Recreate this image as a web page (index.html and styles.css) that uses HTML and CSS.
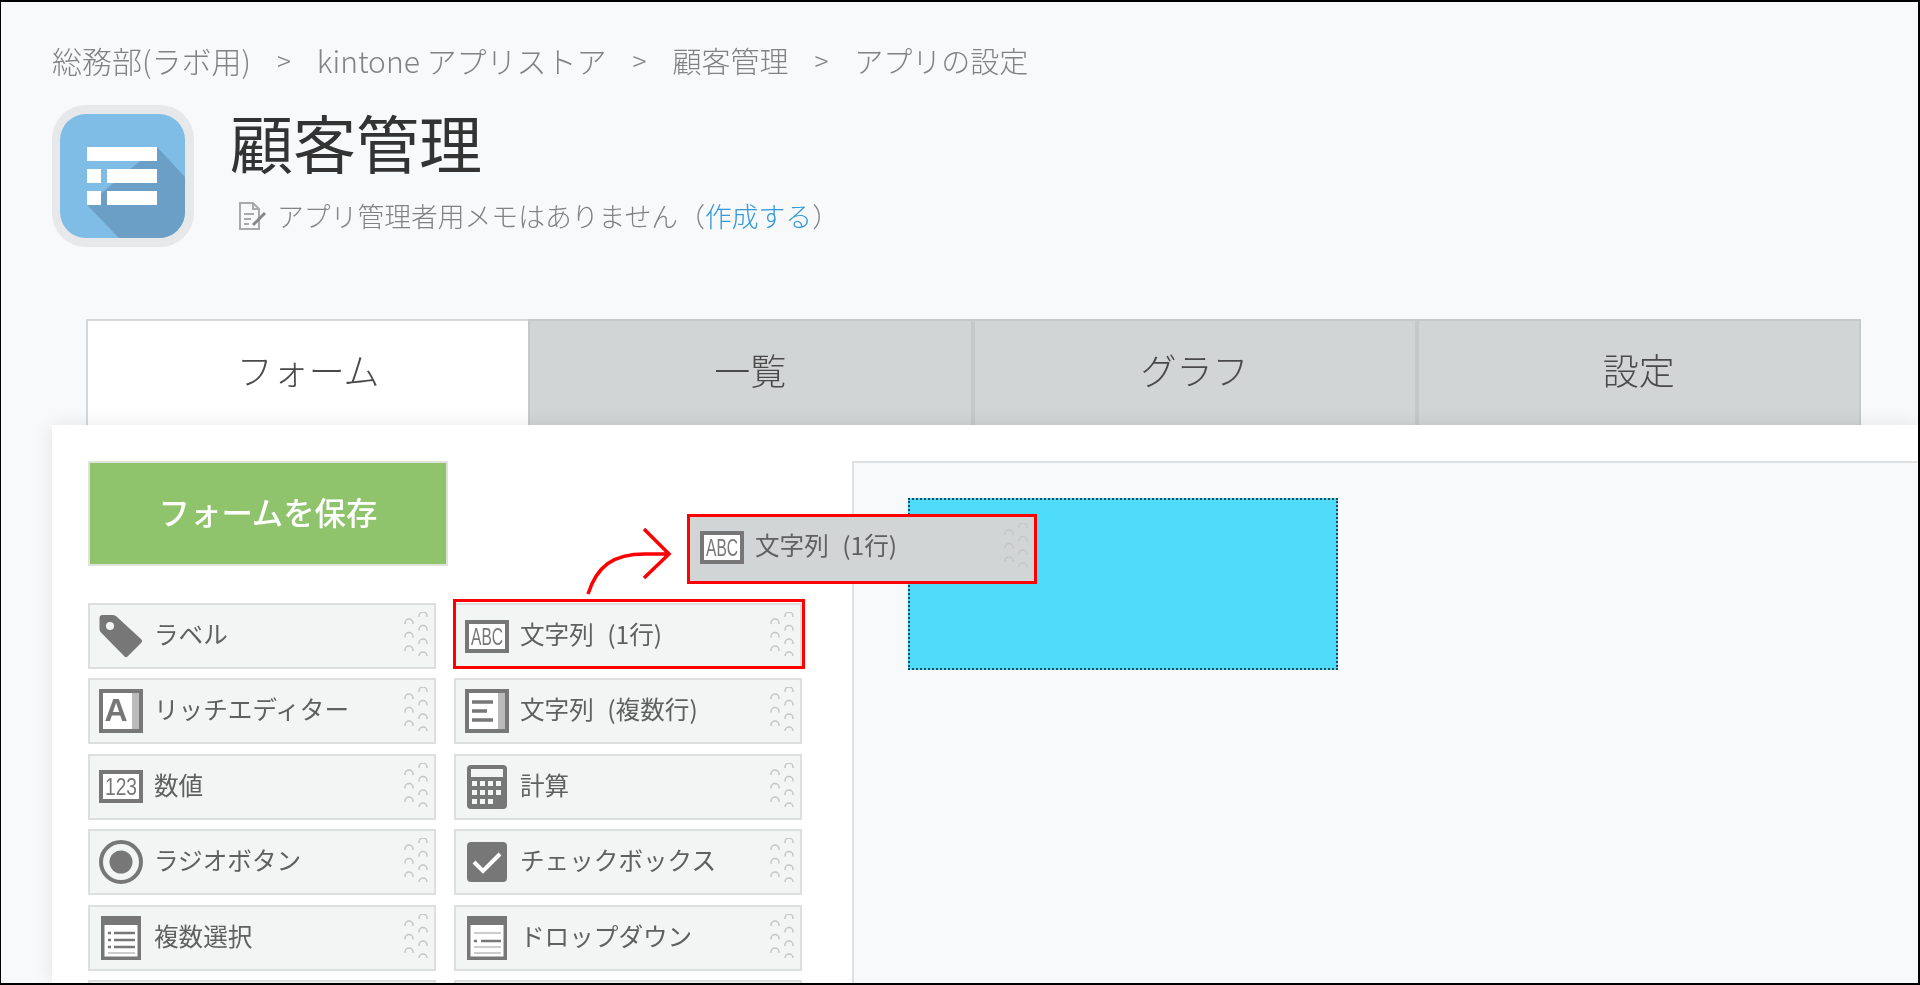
FILE: index.html
```html
<!DOCTYPE html>
<html lang="ja">
<head>
<meta charset="utf-8">
<title>アプリの設定</title>
<link rel="stylesheet" href="styles.css">
</head>
<body>
<svg class="defs" width="0" height="0" aria-hidden="true">
  <defs>
    <symbol id="grip" viewBox="0 0 26 44">
      <g class="grip-arcs">
        <path d="M1 12v-1a4 4 0 0 1 8 0v1M1 25.500v-1a4 4 0 0 1 8 0v1M1 39v-1a4 4 0 0 1 8 0v1"/>
        <path d="M15 5v-1a4 4 0 0 1 8 0v1M15 18.500v-1a4 4 0 0 1 8 0v1M15 32v-1a4 4 0 0 1 8 0v1M15 44v0a4 4 0 0 1 8 0v0"/>
      </g>
    </symbol>
    <symbol id="i-tag" viewBox="0 0 44 44">
      <path class="ic-fill" d="M4 1h10q2 0 3.500 1.500l25 23q1.500 1.500 0 3l-14 14q-1.500 1.500-3 0l-23.500-24q-1.500-1.500-1.500-3.500V4q0-3 3-3z"/>
      <circle class="ic-hole" cx="11" cy="12" r="4"/>
    </symbol>
    <symbol id="i-rich" viewBox="0 0 44 44">
      <rect class="ic-frame" x="2" y="2" width="40" height="40"/>
      <rect class="ic-band" x="33" y="4" width="7" height="36"/>
      <text class="ic-bigletter" x="17" y="32">A</text>
    </symbol>
    <symbol id="i-abc" viewBox="0 0 44 33">
      <rect class="ic-frame" x="2" y="2" width="40" height="29"/>
      <text class="ic-smalltext" x="6" y="24.500" textLength="32" lengthAdjust="spacingAndGlyphs">ABC</text>
    </symbol>
    <symbol id="i-123" viewBox="0 0 44 33">
      <rect class="ic-frame" x="2" y="2" width="40" height="29"/>
      <text class="ic-smalltext" x="6" y="24.500" textLength="32" lengthAdjust="spacingAndGlyphs">123</text>
    </symbol>
    <symbol id="i-multi" viewBox="0 0 44 44">
      <rect class="ic-frame" x="2" y="2" width="40" height="40"/>
      <rect class="ic-band" x="33" y="4" width="7" height="36"/>
      <path class="ic-line" d="M7 13h21M7 22h15M7 31h21"/>
    </symbol>
    <symbol id="i-calc" viewBox="0 0 40 44">
      <rect class="ic-fill" x="0" y="0" width="40" height="44" rx="4"/>
      <rect class="ic-screen" x="4" y="4" width="32" height="8"/>
      <g class="ic-screen">
        <rect x="5" y="16" width="5" height="5"/><rect x="13" y="16" width="5" height="5"/><rect x="21" y="16" width="5" height="5"/><rect x="29" y="16" width="5" height="5"/>
        <rect x="5" y="25" width="5" height="5"/><rect x="13" y="25" width="5" height="5"/><rect x="21" y="25" width="5" height="5"/><rect x="29" y="25" width="5" height="5"/>
        <rect x="5" y="34" width="5" height="5"/><rect x="13" y="34" width="5" height="5"/><rect x="21" y="34" width="5" height="5"/>
      </g>
    </symbol>
    <symbol id="i-radio" viewBox="0 0 44 44">
      <circle class="ic-ring" cx="22" cy="22" r="20"/>
      <circle class="ic-fill" cx="22" cy="22" r="11.500"/>
    </symbol>
    <symbol id="i-check" viewBox="0 0 40 40">
      <rect class="ic-fill" width="40" height="40" rx="4"/>
      <path class="ic-tick" d="M7 20l9 9 17-17"/>
    </symbol>
    <symbol id="i-select" viewBox="0 0 40 44">
      <rect class="ic-frame" x="1.500" y="1.500" width="37" height="41"/>
      <rect class="ic-fill" x="2" y="2" width="36" height="7"/>
      <path class="ic-line-s" d="M13 17h21M13 24h21M13 31h21"/>
      <path class="ic-line-s" d="M7 17h3M7 24h3M7 31h3"/>
      <path class="ic-line-f" d="M7 37h27"/>
    </symbol>
    <symbol id="i-drop" viewBox="0 0 40 44">
      <rect class="ic-frame" x="1.500" y="1.500" width="37" height="41"/>
      <rect class="ic-fill" x="2" y="2" width="36" height="7"/>
      <path class="ic-line-f" d="M7 17h27M7 31h27M7 37h27"/>
      <path class="ic-line-s" d="M7 25h3M14 25h20"/>
    </symbol>
  </defs>
</svg>

<div class="frame">
  <nav class="crumbs">
    <span>総務部(ラボ用)</span><span class="sep">&gt;</span>
    <span>kintone アプリストア</span><span class="sep">&gt;</span>
    <span class="crumb-tight">顧客管理</span><span class="sep">&gt;</span>
    <span class="crumb-tight">アプリの設定</span>
  </nav>

  <header class="app-head">
    <svg class="app-icon" width="142" height="142" viewBox="0 0 142 142">
      <rect class="app-outer" width="142" height="142" rx="34"/>
      <clipPath id="app-clip"><rect x="8" y="9" width="125" height="124" rx="26"/></clipPath>
      <rect class="app-inner" x="8" y="9" width="125" height="124" rx="26"/>
      <polygon class="app-shadow" clip-path="url(#app-clip)" points="105,42 133,72 133,133 67,133 35,100"/>
      <g class="app-bars">
        <rect x="35" y="42" width="70" height="14"/>
        <rect x="35" y="64" width="14" height="14"/><rect x="55" y="64" width="50" height="14"/>
        <rect x="35" y="86" width="14" height="14"/><rect x="55" y="86" width="50" height="14"/>
      </g>
    </svg>
    <div class="app-meta">
      <h1 class="app-title">顧客管理</h1>
      <p class="memo">
        <svg class="memo-icon" width="30" height="30" viewBox="0 0 30 30">
          <path class="memo-sheet" d="M2 2h13l6 6v20H2zM15 2v6h6"/>
          <path class="memo-sheet" d="M6 13h10M6 18h7M6 23h5"/>
          <path class="memo-pen" d="M15 24l12-12"/>
        </svg>
        <span>アプリ管理者用メモはありません（<a class="memo-link">作成する</a>）</span>
      </p>
    </div>
  </header>

  <div class="tabs">
    <div class="tab tab-active">フォーム</div>
    <div class="tab">一覧</div>
    <div class="tab">グラフ</div>
    <div class="tab">設定</div>
  </div>

  <main class="panel">
    <aside class="palette">
      <button class="save">フォームを保存</button>
      <div class="fields">
        <div class="field"><span class="f-icon"><svg width="44" height="44"><use href="#i-tag"/></svg></span><span class="f-label">ラベル</span><svg class="f-grip" width="26" height="44"><use href="#grip"/></svg></div>
        <div class="field"><span class="f-mark"></span><span class="f-icon"><svg width="44" height="33"><use href="#i-abc"/></svg></span><span class="f-label">文字列 (1行)</span><svg class="f-grip" width="26" height="44"><use href="#grip"/></svg></div>
        <div class="field"><span class="f-icon"><svg width="44" height="44"><use href="#i-rich"/></svg></span><span class="f-label">リッチエディター</span><svg class="f-grip" width="26" height="44"><use href="#grip"/></svg></div>
        <div class="field"><span class="f-icon"><svg width="44" height="44"><use href="#i-multi"/></svg></span><span class="f-label">文字列 (複数行)</span><svg class="f-grip" width="26" height="44"><use href="#grip"/></svg></div>
        <div class="field"><span class="f-icon"><svg width="44" height="33"><use href="#i-123"/></svg></span><span class="f-label">数値</span><svg class="f-grip" width="26" height="44"><use href="#grip"/></svg></div>
        <div class="field"><span class="f-icon"><svg width="40" height="44"><use href="#i-calc"/></svg></span><span class="f-label">計算</span><svg class="f-grip" width="26" height="44"><use href="#grip"/></svg></div>
        <div class="field"><span class="f-icon"><svg width="44" height="44"><use href="#i-radio"/></svg></span><span class="f-label">ラジオボタン</span><svg class="f-grip" width="26" height="44"><use href="#grip"/></svg></div>
        <div class="field"><span class="f-icon"><svg width="40" height="40"><use href="#i-check"/></svg></span><span class="f-label">チェックボックス</span><svg class="f-grip" width="26" height="44"><use href="#grip"/></svg></div>
        <div class="field"><span class="f-icon"><svg width="40" height="44"><use href="#i-select"/></svg></span><span class="f-label">複数選択</span><svg class="f-grip" width="26" height="44"><use href="#grip"/></svg></div>
        <div class="field"><span class="f-icon"><svg width="40" height="44"><use href="#i-drop"/></svg></span><span class="f-label">ドロップダウン</span><svg class="f-grip" width="26" height="44"><use href="#grip"/></svg></div>
        <div class="field"></div>
        <div class="field"></div>
      </div>
    </aside>
    <section class="canvas">
      <div class="drop"></div>
    </section>
  </main>

  <svg class="arrow" width="90" height="72" viewBox="0 0 90 72">
    <path d="M3 68C12 40 28 28 60 28H84M59 3L84 28L59 52"/>
  </svg>
  <div class="field drag"><span class="f-icon"><svg width="44" height="33"><use href="#i-abc"/></svg></span><span class="f-label">文字列 (1行)</span><svg class="f-grip" width="26" height="44"><use href="#grip"/></svg></div>
</div>
</body>
</html>
```

FILE: styles.css
```css
* { box-sizing: border-box; }
html, body { margin: 0; height: 100%; overflow: hidden; }
body { font-family: "Noto Sans CJK JP", "Noto Sans", sans-serif; background: #000; }
.defs { position: absolute; }

.frame {
  position: relative;
  width: 1920px;
  height: 985px;
  border-style: solid;
  border-color: #000;
  border-width: 2px 2px 2px 1px;
  background: #f7f9fa;
  overflow: hidden;
  display: flex;
  flex-direction: column;
  filter: blur(.35px);
}

.crumbs {
  margin: 40px 0 0 51px;
  height: 36px;
  display: flex;
  align-items: center;
  font-size: 30px;
  line-height: 36px;
  color: #828282;
  font-weight: 300;
}
.crumb-tight { font-size: 29px; }
.sep { margin: 0 26px; font-size: 26px; }

.app-head { display: flex; margin: 27px 0 0 51px; height: 142px; }
.app-outer { fill: #e6e8e9; }
.app-inner { fill: #7fbde6; }
.app-shadow { fill: #6c9fc5; }
.app-bars { fill: #fff; }
.app-meta { margin-left: 36px; }
.app-title { margin: -6px 0 0; font-size: 63px; line-height: 84px; font-weight: 400; color: #333; }
.memo { margin: 15px 0 0 8px; display: flex; align-items: center; gap: 9px; font-size: 26.800px; line-height: 36px; color: #828282; font-weight: 300; }
.memo-sheet { fill: none; stroke: #aaa; stroke-width: 2; }
.memo-pen { fill: none; stroke: #888; stroke-width: 3; }
.memo-link { color: #3498db; }

.tabs { display: flex; margin: 72px 0 0 85px; width: 1775px; height: 106px; flex: none; }
.tab {
  flex: 1;
  display: flex;
  justify-content: center;
  align-items: center;
  padding-bottom: 8px;
  font-size: 36px;
  color: #4a4a4a;
  font-weight: 300;
  background: #d2d5d6;
  border: solid #c6c9ca;
  border-width: 2px 2px 0 2px;
}
.tab-active { background: #fff; border-color: #d5d7d8; border-right: 0; }

.panel {
  position: relative;
  flex: 1;
  min-height: 0;
  margin-left: 51px;
  display: flex;
  background: #fff;
  box-shadow: 0 0 18px rgba(0, 0, 0, .09);
  overflow: hidden;
}
.palette { width: 800px; flex: none; padding: 36px 0 0 36px; }
.save {
  display: block;
  width: 360px;
  height: 105px;
  font: 500 31.400px "Noto Sans CJK JP", sans-serif;
  color: #fff;
  background: #8fc36c;
  border: 2px solid #dfe3dc;
  padding: 0 0 5px;
}
.fields {
  margin-top: 37px;
  display: grid;
  grid-template-columns: 348px 348px;
  grid-auto-rows: 66px;
  column-gap: 18px;
  row-gap: 9.400px;
}
.field {
  position: relative;
  display: flex;
  align-items: center;
  background: #f3f4f4;
  border: 2px solid #dcdee0;
  font-size: 24.600px;
  word-spacing: 8px;
  color: #606060;
}
.f-icon { width: 44px; margin-left: 9px; display: flex; justify-content: center; flex: none; }
.f-icon svg { display: block; }
.f-label { margin-left: 11px; flex: 1; margin-top: -6px; white-space: nowrap; }
.f-grip { flex: none; margin-right: 4px; margin-top: -4px; }
.grip-arcs { fill: none; stroke: #c4c6c6; stroke-width: 1.500; }
.f-mark { position: absolute; left: -3px; top: -6px; right: -5px; bottom: -2px; border: 3px solid #f00; }

.ic-fill { fill: #777; }
.ic-hole { fill: #f3f4f4; }
.ic-frame { fill: #fff; stroke: #777; stroke-width: 4; }
.ic-band { fill: #bbb; }
.ic-bigletter { fill: #777; font: 700 32px "Liberation Sans", sans-serif; text-anchor: middle; }
.ic-smalltext { fill: #777; font: 400 24px "Liberation Sans", sans-serif; word-spacing: 0; }
.ic-line { stroke: #777; stroke-width: 3.500; fill: none; }
.ic-line-s { stroke: #777; stroke-width: 2.500; fill: none; }
.ic-line-f { stroke: #ccc; stroke-width: 2; fill: none; }
.ic-screen { fill: #f3f4f4; }
.ic-ring { fill: none; stroke: #777; stroke-width: 4; }
.ic-tick { fill: none; stroke: #fff; stroke-width: 4; }

.canvas {
  flex: 1;
  margin-top: 36px;
  background: #f7f9fa;
  border: solid #dfe1e2;
  border-width: 2px 0 0 2px;
}
.drop {
  width: 430px;
  height: 172px;
  margin: 35px 0 0 54px;
  background: #4fdcfb;
  border: 2px dotted #1d4a5a;
}

.arrow { position: absolute; left: 584px; top: 524px; }
.arrow path { fill: none; stroke: #f00; stroke-width: 3.500; }
.drag {
  position: absolute;
  left: 686px;
  top: 512px;
  width: 350px;
  height: 70px;
  padding-bottom: 4px;
  background: #d2d5d6;
  border: 3px solid #f00;
}
.drag .f-icon { margin-left: 10px; }
.drag .grip-arcs { stroke: #b4b7b7; }
```
